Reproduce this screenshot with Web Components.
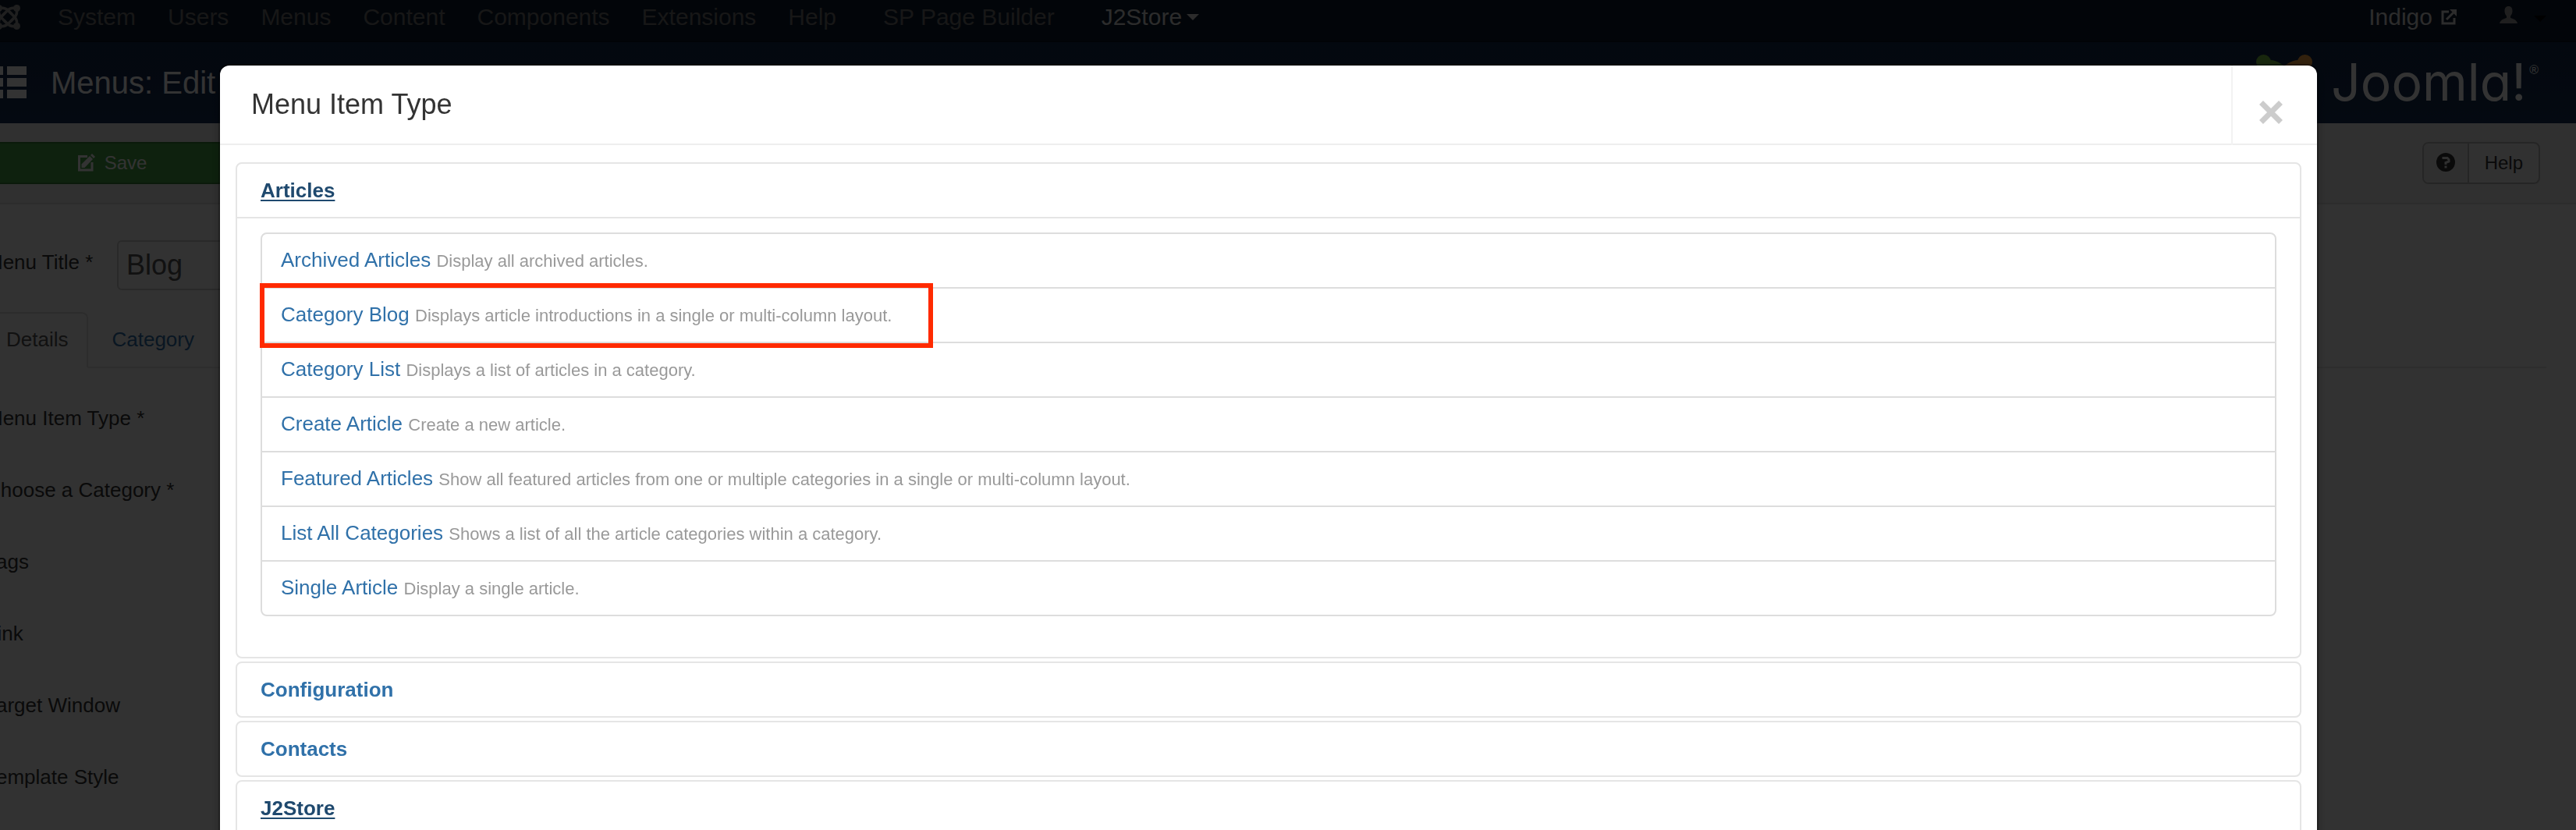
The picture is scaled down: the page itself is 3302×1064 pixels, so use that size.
<!DOCTYPE html>
<html lang="en">
<head>
<meta charset="utf-8">
<title>Menus: Edit Item</title>
<style>
  html, body { margin: 0; height: 100%; }
  body {
    font-family: "Liberation Sans", Arial, sans-serif;
    font-size: 26px;
    line-height: 36px;
    color: #333;
    background: #fafafa;
    overflow: hidden;
  }
</style>
</head>
<body>
<admin-page></admin-page>

<script>
class Base extends HTMLElement {
  constructor() {
    super();
    const root = this.attachShadow({ mode: "open" });
    const t = document.createElement("template");
    t.innerHTML = "<style>*{box-sizing:border-box}a{text-decoration:none}</style>" + this.view();
    root.append(t.content.cloneNode(true));
  }
}

/* One quarter of the interlaced navbar emblem */
const arm = deg => `<g transform="rotate(${deg} 16 16)"><circle cx="27.500" cy="4.500" r="4.500" fill="#999" stroke="none"/><path d="M27 5C21 3 17.500 5.500 15 8L8.500 14.500"/><path d="M27 5C29 11 26.500 14.500 24 17L20 21"/></g>`;

/* Top menu bar */
customElements.define("admin-navbar", class extends Base {
  view() { return `
    <style>
      :host { display: block; background: linear-gradient(#0d1b2e 0, #0d1b2e 50px, #081220 54px); font-size: 30px; line-height: 40px; }
      nav { display: flex; align-items: flex-start; padding: 2px 38px 12px 0; }
      a { color: #727272; }
      .brand { margin: 4px 48px 0 -6px; height: 32px; line-height: 0; }
      .items { display: flex; gap: 41px; list-style: none; margin: 0; padding: 0; }
      .wide { margin-left: 19px; }
      .on { color: #d9d9d9; display: flex; align-items: center; gap: 6px; }
      .right { margin-left: auto; display: flex; align-items: flex-start; }
      .right svg { display: block; }
      .site { display: flex; align-items: center; gap: 11px; margin-right: 55px; }
      .user { display: flex; align-items: flex-start; gap: 21px; padding-top: 6px; }
      .user .caret { margin-top: 12px; }
    </style>
    <nav>
      <a class="brand" href="#" aria-label="Control panel">
        <svg width="32" height="32" viewBox="0 0 32 32" fill="none" stroke="#999" stroke-width="3.500">${arm(0)}${arm(90)}${arm(180)}${arm(270)}</svg>
      </a>
      <ul class="items">
        <li><a href="#">System</a></li>
        <li><a href="#">Users</a></li>
        <li><a href="#">Menus</a></li>
        <li><a href="#">Content</a></li>
        <li><a href="#">Components</a></li>
        <li><a href="#">Extensions</a></li>
        <li><a href="#">Help</a></li>
        <li class="wide"><a href="#">SP Page Builder</a></li>
        <li class="wide"><a class="on" href="#">J2Store
          <svg width="16" height="8" viewBox="0 0 16 8"><path d="M0 0h16L8 8z" fill="#d9d9d9"/></svg></a></li>
      </ul>
      <div class="right">
        <a class="site on" href="#">Indigo
          <svg width="20" height="20" viewBox="0 0 20 20"><path d="M10 3H2v15h15v-7" fill="none" stroke="#d9d9d9" stroke-width="3"/><path d="M7 13L16 4" stroke="#d9d9d9" stroke-width="3"/><path d="M11 0h9v9z" fill="#d9d9d9"/></svg></a>
        <a class="user" href="#" aria-label="User menu">
          <svg width="23" height="22" viewBox="0 0 23 22"><path d="M11.500 0c3.500 0 5 2.500 5 6 0 3-1 5-2.500 6.500v2.500c5 1.500 8 3 9 7H0c1-4 4-5.500 9-7v-2.500C7.500 11 6.500 9 6.500 6c0-3.500 1.500-6 5-6z" fill="#999"/></svg>
          <svg class="caret" width="16" height="8" viewBox="0 0 16 8"><path d="M0 0h16L8 8z" fill="#000"/></svg>
        </a>
      </div>
    </nav>`; }
});

/* Blue title strip */
customElements.define("title-strip", class extends Base {
  view() { return `
    <style>
      :host { display: flex; align-items: center; height: 104px; padding-right: 48px; background: linear-gradient(#13294a, #152f55); color: #fff; }
      .list { margin-left: -6px; }
      h1 { margin: 0 0 0 31px; font-size: 40px; line-height: 48px; font-weight: 400; }
      .logo { margin-left: auto; display: flex; align-items: flex-start; height: 72px; }
      .word { width: 262px; margin-left: 12px; text-align: right; font-family: Inter, "Liberation Sans", sans-serif; font-feature-settings: "cv11"; font-size: 66px; line-height: 70px; }
      .reg { font-size: 16px; line-height: 16px; margin: 12px 0 0 4px; }
    </style>
    <svg class="list" width="40" height="42" viewBox="0 0 40 42" fill="#fff"><path d="M0 0h10v11H0zM15 0h25v11H15zM0 15h10v11H0zM15 15h25v11H15zM0 30h10v11H0zM15 30h25v11H15z"/></svg>
    <h1>Menus: Edit</h1>
    <div class="logo">
      <svg width="72" height="72" viewBox="0 0 72 72">
        <g fill="none" stroke-width="12"><path d="M12 14C24 10 32 18 50 36" stroke="#7ac143"/><path d="M60 14C48 10 40 18 22 36" stroke="#f9a541"/><path d="M14 60C10 48 18 40 36 22" stroke="#5091cd"/><path d="M58 60C62 48 54 40 36 22" stroke="#f44321"/></g>
        <circle cx="9.500" cy="9.500" r="9.500" fill="#7ac143"/><circle cx="62.500" cy="9.500" r="9.500" fill="#f9a541"/>
        <circle cx="9.500" cy="62.500" r="9.500" fill="#5091cd"/><circle cx="62.500" cy="62.500" r="9.500" fill="#f44321"/>
      </svg>
      <span class="word">Joomla!</span><span class="reg">®</span>
    </div>`; }
});

/* Save / Help buttons */
customElements.define("action-bar", class extends Base {
  view() { return `
    <style>
      :host { display: flex; justify-content: space-between; padding: 24px 46px 24px 0; background: #ededed; border-bottom: 2px solid #dcdcdc; }
      button { font: inherit; font-size: 24px; line-height: 32px; height: 54px; cursor: pointer; display: flex; align-items: center; }
      .save { width: 322px; margin-left: -18px; justify-content: center; gap: 12px; color: #fff; background: #46a546; border: 2px solid #378137; border-radius: 6px; padding: 0; }
      .help { padding: 0; color: #333; background: #f3f3f3; border: 2px solid #bbb; border-radius: 8px; }
      .help span { padding: 0 20px; }
      .mark { display: flex; align-items: center; width: 58px; height: 50px; padding: 0 0 2px 16px; border-right: 2px solid #bbb; background: #ebebeb; border-radius: 6px 0 0 6px; }
    </style>
    <button class="save"><svg width="24" height="24" viewBox="0 0 24 24"><path d="M14 3.500H3.500v17.500H20V11" fill="none" stroke="#fff" stroke-width="3"/><path d="M6.500 18v-4.500L17 3l4 4-10.500 11z" fill="#fff"/><path d="M18 2l2-2 4 4-2 2z" fill="#fff"/></svg>Save</button>
    <button class="help"><i class="mark"><svg width="24" height="24" viewBox="0 0 24 24"><circle cx="12" cy="12" r="12" fill="#333"/><path d="M7.500 6.500h6.500l2 2v2.500l-4 1.500v2.500" fill="none" stroke="#ebebeb" stroke-width="3"/><path d="M10.500 16.500h3v3h-3z" fill="#ebebeb"/></svg></i><span>Help</span></button>`; }
});

/* One labelled field of the edit form */
customElements.define("form-field", class extends Base {
  view() { return `
    <style>
      :host { display: block; margin-bottom: 36px; }
      div { display: flex; align-items: flex-start; }
      label { flex: none; width: 360px; padding-top: 10px; color: #333; white-space: nowrap; }
      input { width: 440px; height: 56px; font: inherit; padding: 0 10px; color: #555; background: #fff; border: 2px solid #ccc; border-radius: 6px; }
      :host([large]) { margin-bottom: 28px; }
      :host([large]) label { width: 168px; }
      :host([large]) input { height: 64px; font-size: 36px; background: #fafafa; }
    </style>
    <div><label for="f"></label><input id="f" type="text"></div>`; }
  connectedCallback() {
    this.shadowRoot.querySelector("label").textContent = this.getAttribute("label");
    this.shadowRoot.querySelector("input").value = this.getAttribute("value") || "";
  }
});

customElements.define("edit-form", class extends Base {
  view() { return `
    <style>
      :host { display: block; padding: 46px 38px 0 0; }
      form { margin-left: -18px; }
      .tabs { display: flex; gap: 4px; margin-bottom: 36px; border-bottom: 2px solid #e2e2e2; }
      .tabs a { margin-bottom: -2px; padding: 15px 24px 17px; border: 2px solid transparent; color: #3071a9; border-radius: 8px 8px 0 0; }
      .tabs a.on { color: #555; border-color: #ddd; border-bottom-color: #fafafa; background: #fafafa; }
    </style>
    <form>
      <form-field large label="Menu Title *" value="Blog"></form-field>
      <nav class="tabs"><a class="on" href="#">Details</a><a href="#">Category</a></nav>
      <form-field label="Menu Item Type *"></form-field>
      <form-field label="Choose a Category *"></form-field>
      <form-field label="Tags"></form-field>
      <form-field label="Link"></form-field>
      <form-field label="Target Window"></form-field>
      <form-field label="Template Style"></form-field>
    </form>`; }
});

/* Entry of the type list; "marked" draws the red callout frame */
customElements.define("type-entry", class extends Base {
  view() { return `
    <style>
      :host { display: block; border-top: 2px solid #ddd; }
      :host(:first-of-type) { border-top: 0; }
      a { position: relative; display: inline-block; padding: 15px 24px 17px; color: #3071a9; vertical-align: top; }
      small { font-size: 22px; line-height: 24px; color: #999; }
      :host([marked]) a::after { content: ""; position: absolute; inset: -7px -29px -8px -3px; border: 6px solid #ff2a00; z-index: 1; }
    </style>
    <a href="#"><slot></slot> <small></small></a>`; }
  connectedCallback() { this.shadowRoot.querySelector("small").textContent = this.getAttribute("note"); }
});

customElements.define("type-group", class extends Base {
  view() { return `
    <style>
      :host { display: block; margin-bottom: 4px; border: 2px solid #e5e5e5; border-radius: 8px; }
      h4 { margin: 0; padding: 16px 30px; font-size: 26px; line-height: 36px; font-weight: 700; }
      a { color: #3071a9; }
      .body { display: none; border-top: 2px solid #e5e5e5; padding: 18px 30px 52px; }
      .list { border: 2px solid #ddd; border-radius: 8px; }
      :host([open]) .body { display: block; }
      :host([open]) a { color: #1f496e; text-decoration: underline; text-decoration-thickness: 2px; text-underline-offset: 3px; }
    </style>
    <h4><a href="#"></a></h4>
    <div class="body"><div class="list"><slot></slot></div></div>`; }
  connectedCallback() { this.shadowRoot.querySelector("h4 a").textContent = this.getAttribute("name"); }
});

customElements.define("type-dialog", class extends Base {
  view() { return `
    <style>
      :host { position: fixed; inset: 0; overflow: hidden; background: rgba(0, 0, 0, .8); display: flex; align-items: flex-start; padding: 84px 332px 0 282px; }
      section { flex: 1; min-width: 0; min-height: 100vh; background: #fff; border-radius: 12px; box-shadow: 0 0 0 2px rgba(0,0,0,.3), 0 6px 14px rgba(0,0,0,.3); }
      header { display: flex; justify-content: space-between; height: 102px; border-bottom: 2px solid #eee; }
      h3 { margin: 0; padding-left: 40px; font-size: 36px; line-height: 100px; font-weight: 400; color: #333; }
      button { width: 110px; height: 102px; border: 0; border-left: 2px solid #f2f2f2; background: none; padding: 18px 10px 0 0; cursor: pointer; }
      svg { display: block; margin: 0 auto; }
      .content { padding: 22px 20px; }
    </style>
    <section role="dialog" aria-labelledby="t">
      <header>
        <h3 id="t">Menu Item Type</h3>
        <button aria-label="Close"><svg width="30" height="30" viewBox="0 0 30 30"><path d="M2.500 2.500l25 25M27.500 2.500l-25 25" stroke="#ccc" stroke-width="7"/></svg></button>
      </header>
      <div class="content"><slot></slot></div>
    </section>`; }
});

customElements.define("admin-page", class extends Base {
  view() { return `
    <style>:host { display: block; height: 100vh; overflow: hidden; }</style>
    <admin-navbar></admin-navbar>
    <title-strip></title-strip>
    <action-bar></action-bar>
    <edit-form></edit-form>
    <type-dialog>
      <type-group name="Articles" open>
        <type-entry note="Display all archived articles.">Archived Articles</type-entry>
        <type-entry marked note="Displays article introductions in a single or multi-column layout.">Category Blog</type-entry>
        <type-entry note="Displays a list of articles in a category.">Category List</type-entry>
        <type-entry note="Create a new article.">Create Article</type-entry>
        <type-entry note="Show all featured articles from one or multiple categories in a single or multi-column layout.">Featured Articles</type-entry>
        <type-entry note="Shows a list of all the article categories within a category.">List All Categories</type-entry>
        <type-entry note="Display a single article.">Single Article</type-entry>
      </type-group>
      <type-group name="Configuration"></type-group>
      <type-group name="Contacts"></type-group>
      <type-group name="J2Store" open></type-group>
    </type-dialog>`; }
});
</script>
</body>
</html>
